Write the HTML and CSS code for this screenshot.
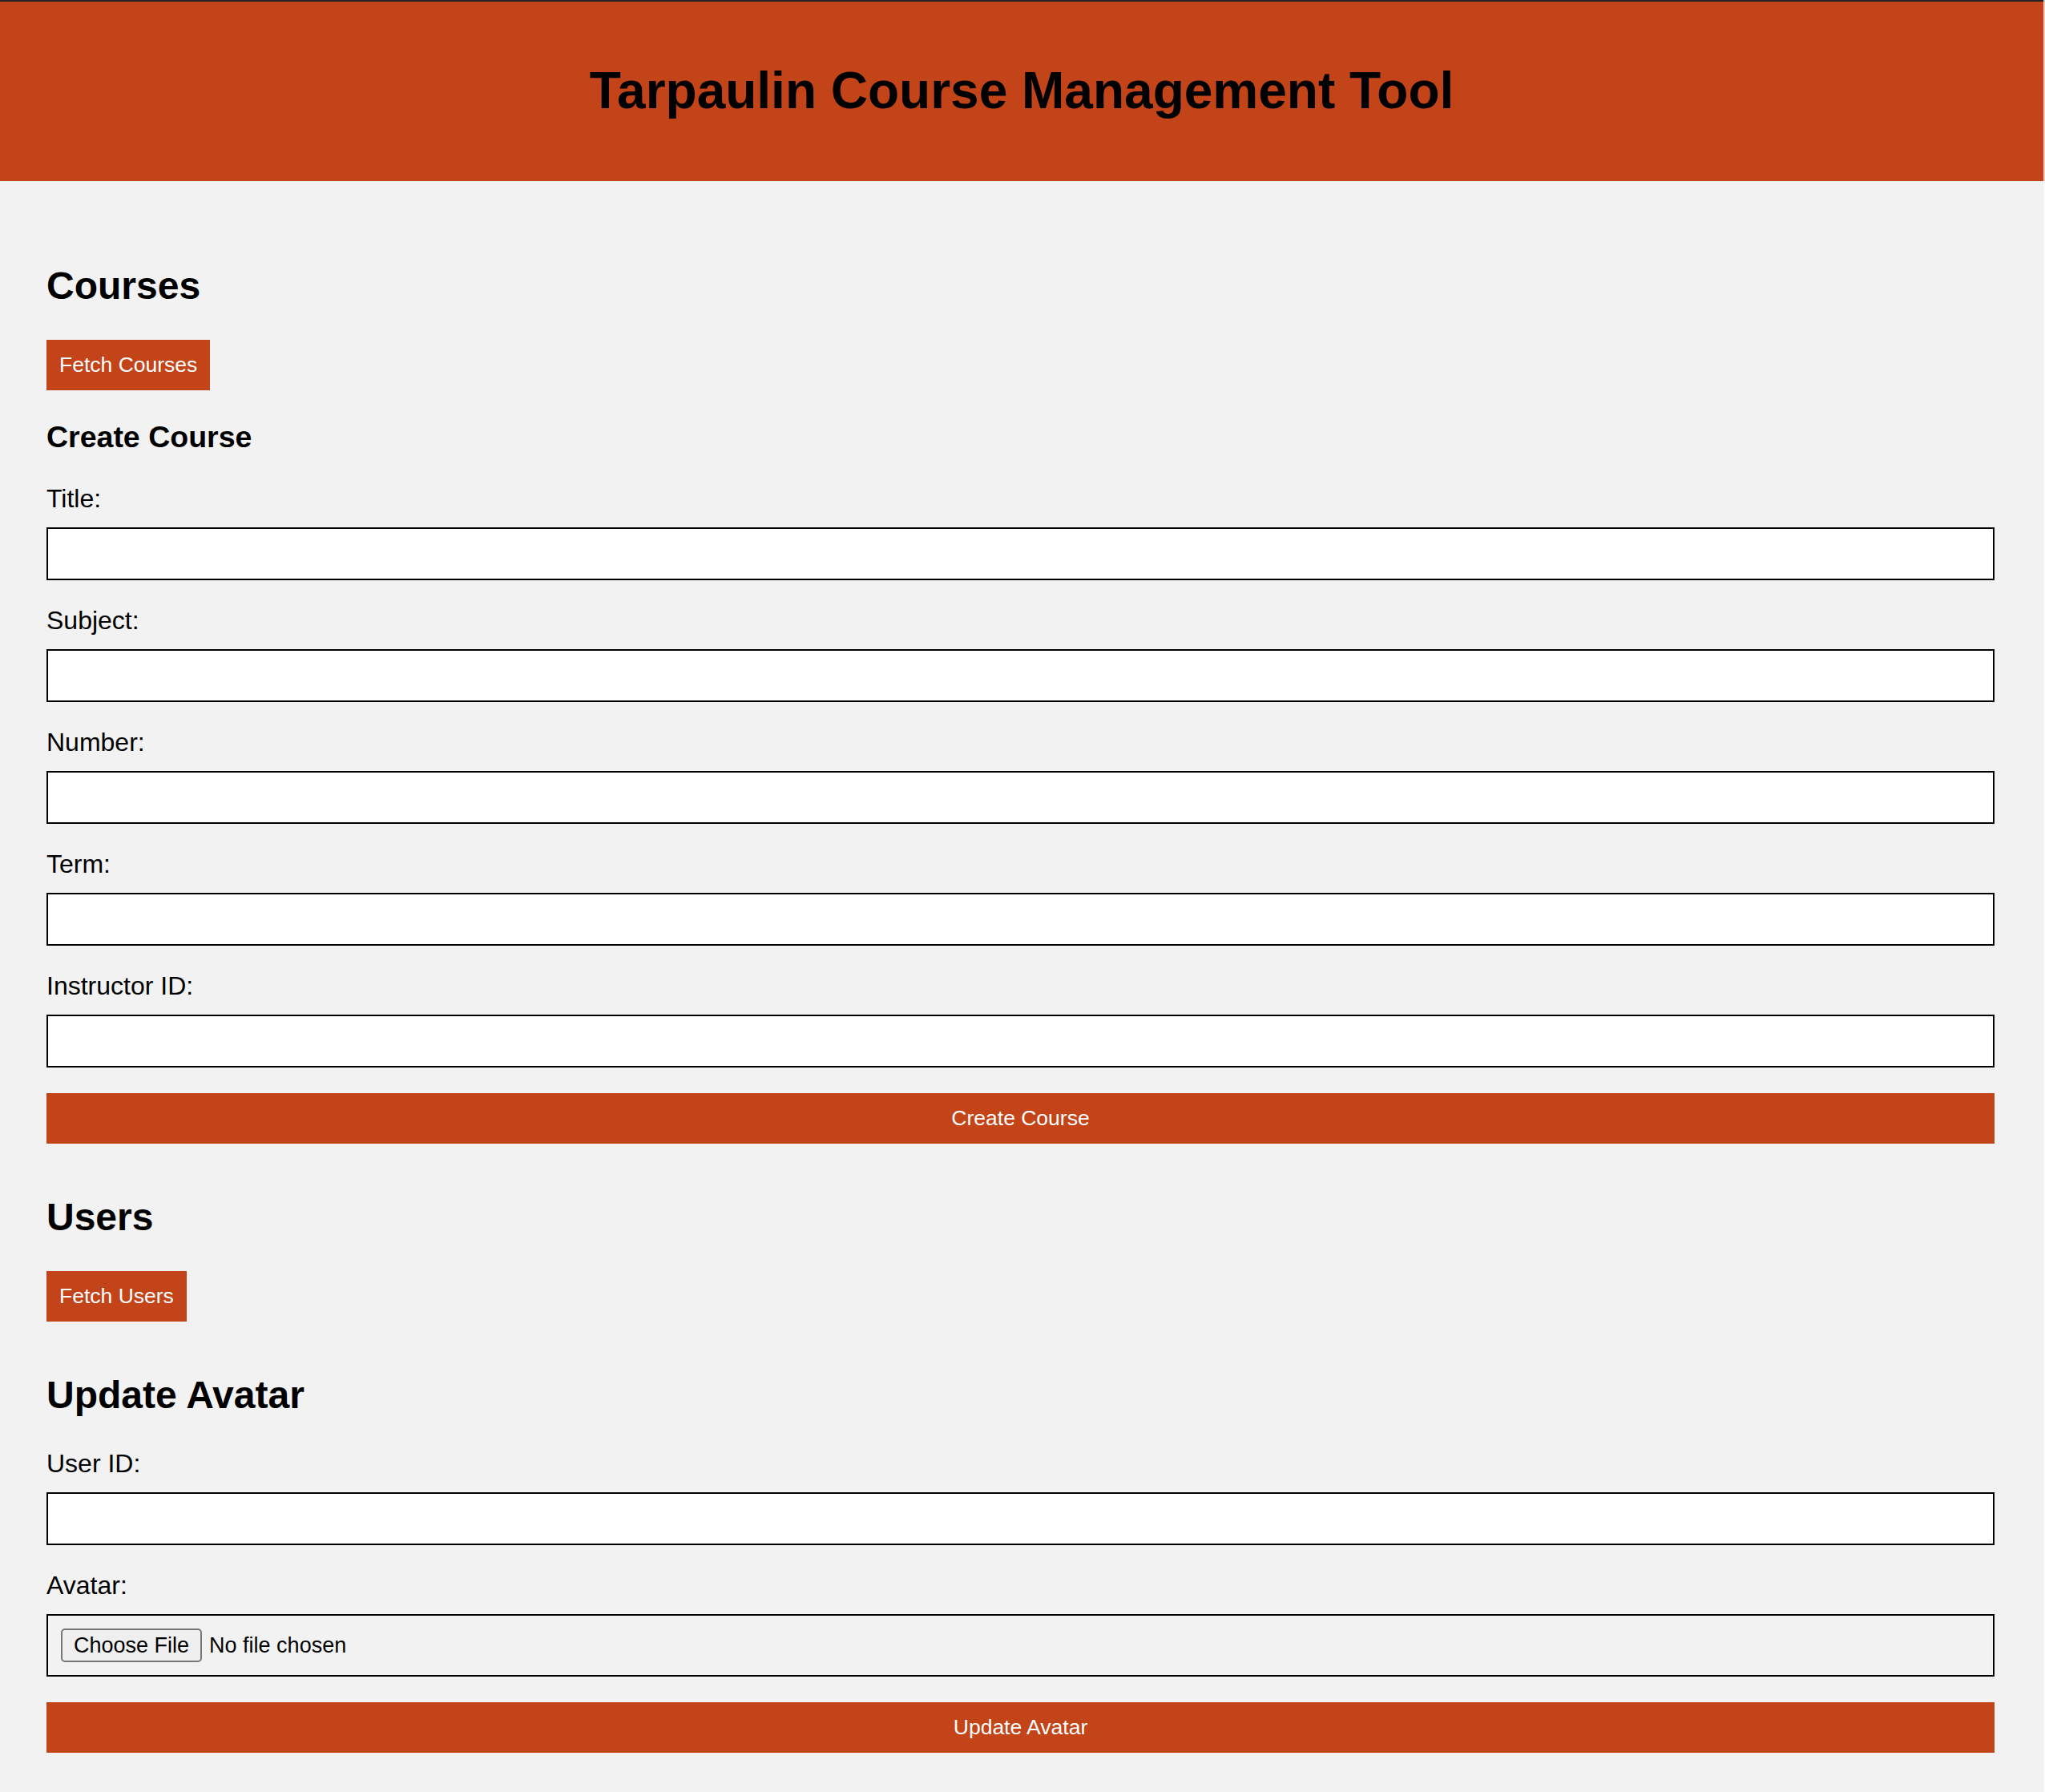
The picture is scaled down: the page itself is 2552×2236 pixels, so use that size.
FILE: index.html
```html
<!DOCTYPE html>
<html lang="en">
<head>
<meta charset="utf-8">
<title>Tarpaulin Course Management Tool</title>
<link rel="stylesheet" href="styles.css">
</head>
<body>
<header class="site-header">
  <h1 class="site-title">Tarpaulin Course Management Tool</h1>
</header>
<main class="content">
  <section class="section">
    <h2 class="section-title">Courses</h2>
    <button class="btn" type="button">Fetch Courses</button>
    <h3 class="subsection-title">Create Course</h3>
    <form class="form">
      <label class="field-label" for="title">Title:</label>
      <input class="field-input" id="title" type="text">
      <label class="field-label" for="subject">Subject:</label>
      <input class="field-input" id="subject" type="text">
      <label class="field-label" for="number">Number:</label>
      <input class="field-input" id="number" type="text">
      <label class="field-label" for="term">Term:</label>
      <input class="field-input" id="term" type="text">
      <label class="field-label" for="instructor">Instructor ID:</label>
      <input class="field-input" id="instructor" type="text">
      <button class="btn btn-block" type="button">Create Course</button>
    </form>
  </section>
  <section class="section">
    <h2 class="section-title">Users</h2>
    <button class="btn" type="button">Fetch Users</button>
  </section>
  <section class="section">
    <h2 class="section-title">Update Avatar</h2>
    <form class="form">
      <label class="field-label" for="userid">User ID:</label>
      <input class="field-input" id="userid" type="text">
      <label class="field-label" for="avatar">Avatar:</label>
      <input class="field-input file-input" id="avatar" type="file">
      <button class="btn btn-block" type="button">Update Avatar</button>
    </form>
  </section>
</main>
<div class="edge-strip"></div>
</body>
</html>
```
FILE: styles.css
```css
html, body {
  margin: 0;
  padding: 0;
}
body {
  background: #f2f2f2;
  font-family: "Liberation Sans", Arial, Helvetica, sans-serif;
  color: #000;
}
.site-header {
  background: #c24418;
  border-top: 2px solid #222;
  padding: 75px 2px 77px 0;
  text-align: center;
}
.site-title {
  margin: 0;
  font-size: 64px;
  line-height: 72px;
  font-weight: bold;
}
.content {
  padding: 103px 63px 40px 58px;
}
.section {
  margin-bottom: 64px;
}
.section-title {
  margin: 0 0 40px;
  font-size: 48px;
  line-height: 55px;
  font-weight: bold;
}
.subsection-title {
  margin: 37px 0 38px;
  font-size: 37.5px;
  line-height: 42px;
  font-weight: bold;
}
.form {
  margin: 0;
}
.btn {
  display: block;
  width: max-content;
  margin: 0;
  padding: 16px 16px;
  border: none;
  background: #c24418;
  color: #fff;
  font-family: inherit;
  font-size: 26.5px;
  line-height: 31px;
  cursor: pointer;
}
.btn-block {
  width: 100%;
  text-align: center;
}
.field-label {
  display: block;
  font-size: 32px;
  line-height: 36px;
  margin-bottom: 18px;
}
.field-input {
  display: block;
  box-sizing: border-box;
  width: 100%;
  height: 66px;
  margin: 0 0 32px;
  padding: 0 16px;
  border: 2px solid #000;
  border-radius: 0;
  background: #fff;
  font-family: inherit;
  font-size: 27px;
  outline: none;
}
.file-input {
  height: 78px;
  padding: 16px;
  background: transparent;
  line-height: 42px;
}
.file-input::file-selector-button {
  box-sizing: border-box;
  height: 42px;
  margin: 0 9px 0 0;
  padding: 0 14px;
  border: 2px solid #767676;
  border-radius: 5px;
  background: #efefef;
  color: #000;
  font-family: inherit;
  font-size: 27px;
  line-height: 38px;
  vertical-align: top;
}
.edge-strip {
  position: fixed;
  top: 0;
  right: 0;
  width: 2px;
  height: 100%;
  background: rgba(255, 255, 255, 0.7);
}
```
